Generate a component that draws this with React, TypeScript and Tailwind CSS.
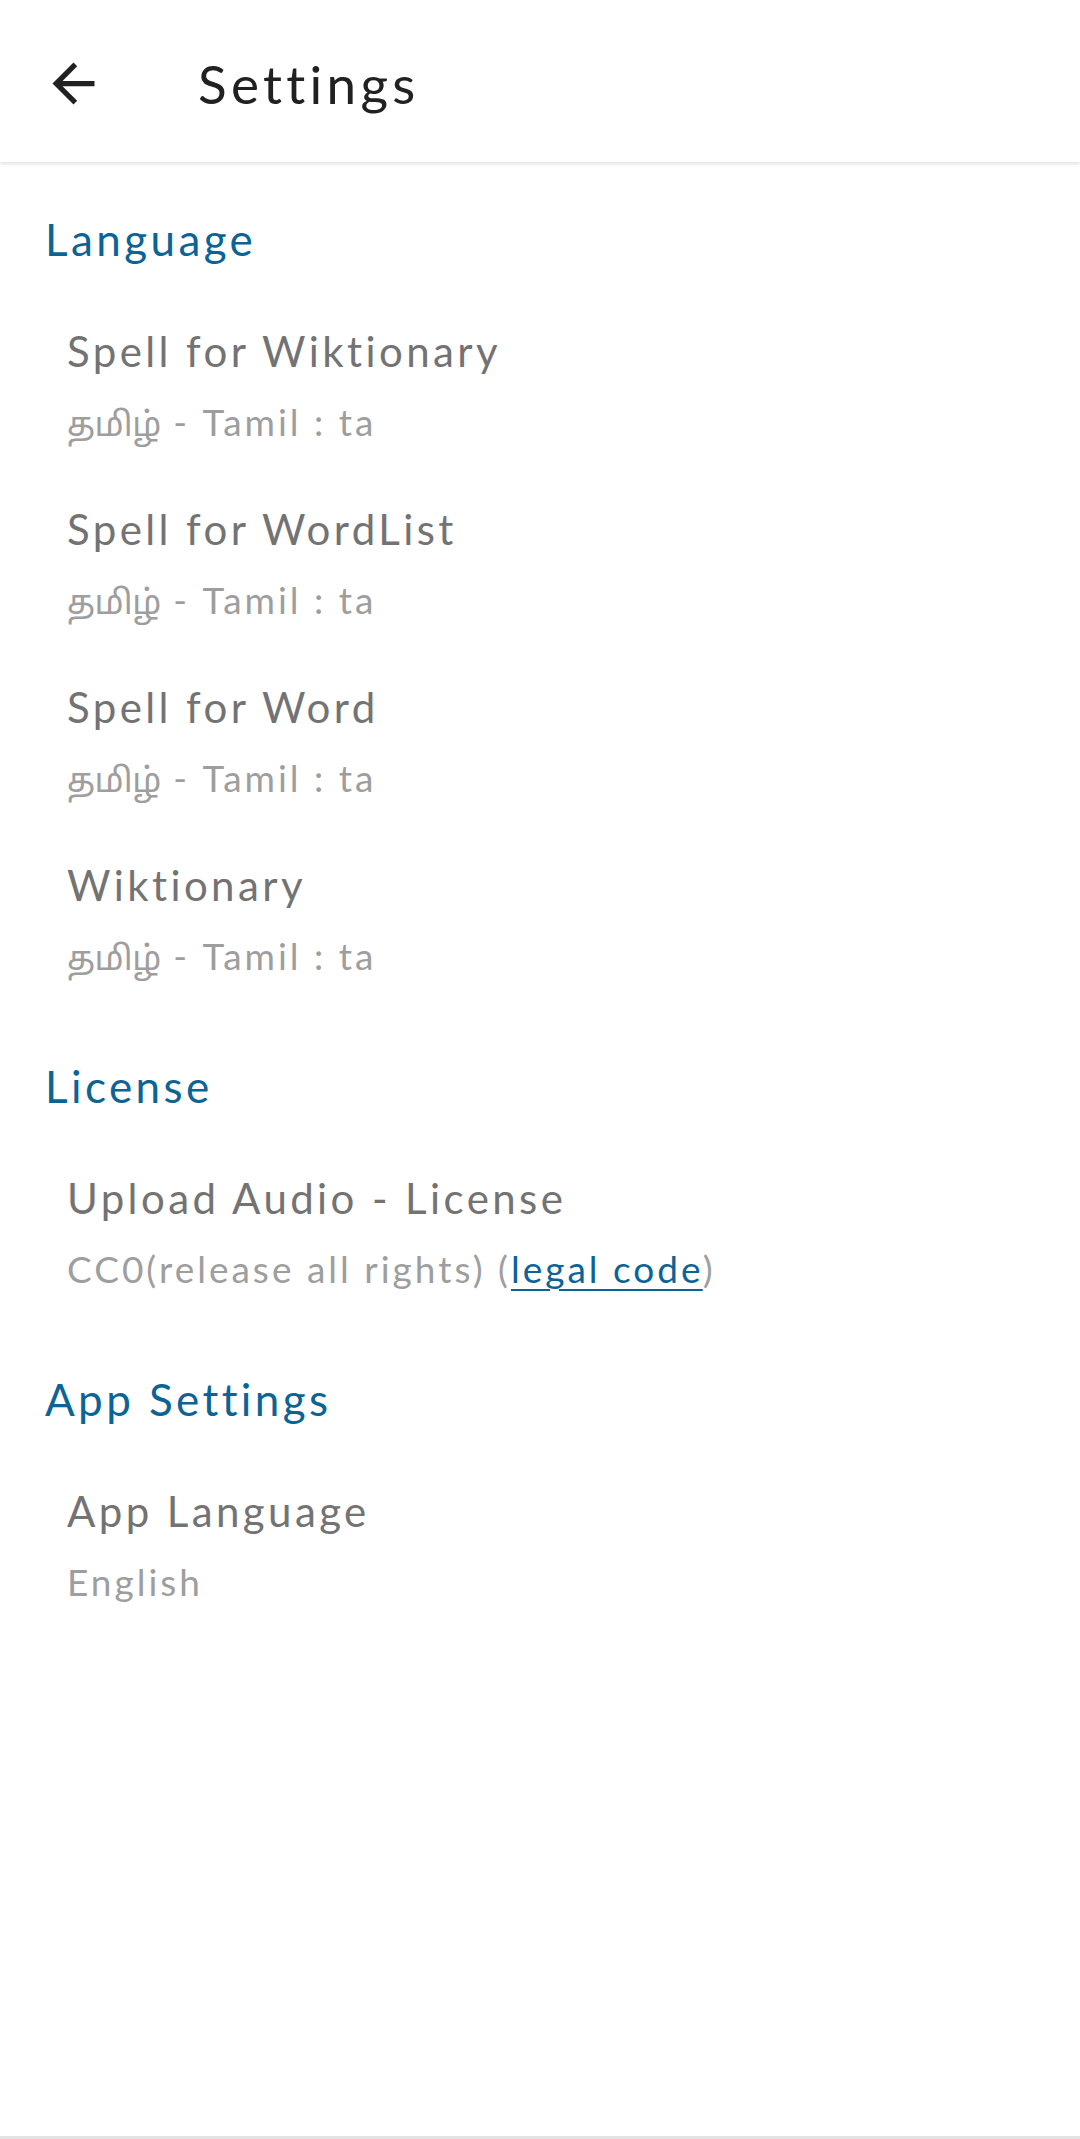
const font = { fontFamily: "Lato, 'Noto Sans', 'Noto Sans Tamil', sans-serif" };

type Item = { title: string; summary: React.ReactNode };
type Section = { name: string; items: Item[] };

const tamil = (
  <>
    <span className="text-[34px] leading-none tracking-[-0.5px]">தமிழ்</span> - Tamil : ta
  </>
);

const sections: Section[] = [
  {
    name: "Language",
    items: [
      { title: "Spell for Wiktionary", summary: tamil },
      { title: "Spell for WordList", summary: tamil },
      { title: "Spell for Word", summary: tamil },
      { title: "Wiktionary", summary: tamil },
    ],
  },
  {
    name: "License",
    items: [
      {
        title: "Upload Audio - License",
        summary: (
          <>
            CC0(release all rights) (
            <span className="text-[#0c6496] underline decoration-2 underline-offset-[6px]">legal code</span>)
          </>
        ),
      },
    ],
  },
  {
    name: "App Settings",
    items: [{ title: "App Language", summary: "English" }],
  },
];

function ArrowBack() {
  return (
    <svg viewBox="0 0 24 24" className="w-[63px] h-[63px]" fill="#212121">
      <path d="M20 11H7.83l5.59-5.59L12 4l-8 8 8 8 1.41-1.41L7.83 13H20v-2z" />
    </svg>
  );
}

export default function App() {
  return (
    <div
      className="w-[1080px] h-[2139px] bg-white flex flex-col overflow-hidden [font-variant-ligatures:none]"
      style={font}
    >
      {/* toolbar */}
      <header className="h-[162px] flex items-center pt-[5px] shadow-[0_2px_4px_rgba(0,0,0,0.12)] relative z-10 bg-white">
        <div className="ml-[42px]">
          <ArrowBack />
        </div>
        <h1 className="ml-[93px] text-[53px] tracking-[4.3px] text-[#212121] leading-none">Settings</h1>
      </header>

      <main className="flex-1 flex flex-col">
        {sections.map((section) => (
          <section key={section.name}>
            <h2 className="pl-[45px] pt-[47px] pb-[28px] text-[44px] tracking-[3.4px] leading-[60px] text-[#0c6496]">
              {section.name}
            </h2>
            {section.items.map((item) => (
              <div key={item.title} className="pl-[67px] pt-[26px] pb-[25px] flex flex-col gap-[15px]">
                <p className="text-[42px] tracking-[3.4px] leading-[56px] text-[#737373]">{item.title}</p>
                <p className="text-[37px] tracking-[3px] leading-[56px] text-[#9e9e9e]">{item.summary}</p>
              </div>
            ))}
          </section>
        ))}
      </main>

      <div className="h-[3px] bg-[#e3e3e3]" />
    </div>
  );
}
